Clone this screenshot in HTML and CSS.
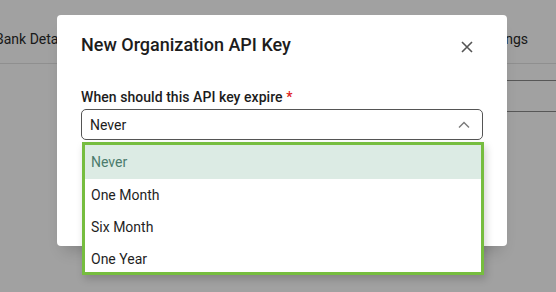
FILE: index.html
```html
<!DOCTYPE html>
<html lang="en">
  <head>
    <meta charset="UTF-8" />
    <meta name="viewport" content="width=device-width, initial-scale=1.0" />
    <title>API Keys</title>
    <link rel="stylesheet" href="styles.css">
  </head>
  <body>
    <!-- page behind the dialog -->
    <div id="page">
      <div id="tabs">
        <div class="tab">Bank Details</div>
        <div class="tab">API Settings</div>
      </div>
      <div id="page-body">
        <div class="page-row"></div>
      </div>
    </div>

    <div id="backdrop"></div>

    <!-- dialog -->
    <div id="dialog">
      <div class="dialog-head">
        <h1>New Organization API Key</h1>
        <button class="close-btn" aria-label="close">
          <svg width="12" height="12" viewBox="0 0 12 12">
            <path d="M1 1 L11 11 M11 1 L1 11" stroke="#555" stroke-width="1.6" fill="none" />
          </svg>
        </button>
      </div>
      <label class="field-label">When should this API key expire <span class="req">*</span></label>
      <div class="select-box">
        <span>Never</span>
        <svg width="12" height="8" viewBox="0 0 12 8">
          <polyline points="1,6.5 6,1.5 11,6.5" stroke="#7a7a7a" stroke-width="1.4" fill="none" />
        </svg>
      </div>
    </div>

    <!-- open select menu -->
    <ul id="menu">
      <li class="selected">Never</li>
      <li>One Month</li>
      <li>Six Month</li>
      <li>One Year</li>
    </ul>
  </body>
</html>
```

FILE: styles.css
```css
body {
  margin: 0;
  font-family: Roboto, "Noto Sans", sans-serif;
  color: #1f1f1f;
  background: #fff;
  overflow: hidden;
}

#page {
  width: 556px;
  height: 292px;
  overflow: hidden;
}

#tabs {
  display: flex;
  justify-content: space-between;
  margin-left: -5px;
  height: 48px;
  padding: 15px 28px 0 0;
  border-bottom: 1px solid #e2e2e2;
}

.tab {
  font-size: 14px;
  line-height: 20px;
  padding-top: 14px;
  white-space: nowrap;
  color: #2a2a2a;
}

#page-body {
  display: flex;
  justify-content: flex-end;
  padding-top: 16px;
}

.page-row {
  width: 200px;
  height: 30px;
  border-top: 1px solid #8a8a8a;
  border-bottom: 1px solid #8a8a8a;
}

#backdrop {
  position: absolute;
  inset: 0;
  background: rgba(0, 0, 0, 0.37);
}

#dialog {
  position: absolute;
  top: 15px;
  left: 57px;
  width: 450px;
  height: 231px;
  box-sizing: border-box;
  padding: 16px 24px 0;
  background: #fff;
  border-radius: 4px;
  box-shadow: rgba(0, 0, 0, 0.2) 0px 11px 15px -7px;
}

.dialog-head {
  display: flex;
  align-items: center;
  justify-content: space-between;
  height: 28px;
}

.dialog-head > h1 {
  margin: 0;
  font-size: 18px;
  font-weight: 500;
  line-height: 28px;
  color: #1c1c1c;
}

.close-btn {
  width: 24px;
  height: 24px;
  margin: 4px 4px 0 0;
  padding: 0;
  border: none;
  background: none;
  display: flex;
  align-items: center;
  justify-content: center;
}

.field-label {
  display: block;
  margin-top: 28px;
  font-size: 14px;
  font-weight: 500;
  line-height: 20px;
  letter-spacing: 0.05px;
  color: #1c1c1c;
}

.req {
  color: #e02020;
}

.select-box {
  margin-top: 2px;
  height: 31px;
  box-sizing: border-box;
  border: 1px solid #555;
  border-radius: 5px;
  padding: 1px 12px 0 8px;
  display: flex;
  align-items: center;
  justify-content: space-between;
  font-size: 14px;
  color: #1c1c1c;
}

#menu {
  position: absolute;
  top: 142px;
  left: 82px;
  width: 402px;
  height: 133px;
  box-sizing: border-box;
  margin: 0;
  padding: 0;
  list-style: none;
  overflow: hidden;
  background: #fff;
  border: 3px solid #76bd3f;
  box-shadow: rgba(0, 0, 0, 0.18) 2px 4px 8px 0px;
}

#menu > li {
  height: 32px;
  line-height: 32px;
  padding-left: 6px;
  font-size: 14px;
  color: #1f1f1f;
}

#menu > li.selected {
  height: 34px;
  line-height: 34px;
  background: #dcebe4;
  color: #4b7b6c;
}
```
